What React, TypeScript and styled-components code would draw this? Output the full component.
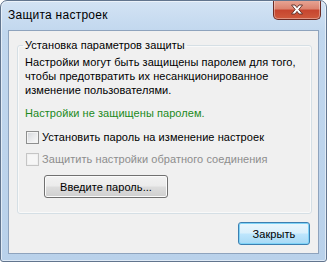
import styled, { createGlobalStyle, css } from "styled-components";

const Global = createGlobalStyle`
  html, body {
    margin: 0;
    padding: 0;
    background: #fff;
  }
  * {
    box-sizing: border-box;
  }
`;

const Window = styled.div`
  width: 327px;
  height: 262px;
  display: flex;
  flex-direction: column;
  border: 1px solid #62758e;
  border-radius: 7px 7px 3px 3px;
  background: linear-gradient(180deg, #d3e3f4 0%, #c1d7ee 12%, #b9d1ea 100%);
  box-shadow: inset 0 0 0 1px rgba(255, 255, 255, 0.55);
  overflow: hidden;
`;

const TitleBar = styled.div`
  height: 29px;
  display: flex;
  align-items: flex-start;
  justify-content: space-between;
  padding-left: 7px;
  padding-right: 5px;
`;

const Title = styled.span`
  padding-top: 6px;
  font-family: "Liberation Sans", Arial, sans-serif;
  font-size: 12px;
  line-height: 16px;
  letter-spacing: 0.25px;
  color: #000;
`;

const CloseX = styled.div`
  width: 48px;
  height: 20px;
  margin-top: -1px;
  display: flex;
  align-items: center;
  justify-content: center;
  border: 1px solid #6d2b24;
  border-top: none;
  border-radius: 0 0 5px 5px;
  background: linear-gradient(180deg, #e8a797 0%, #dc8470 45%, #c7462f 55%, #cf5a3d 100%);
  box-shadow: inset 0 0 0 1px rgba(255, 255, 255, 0.35);
`;

const Frame = styled.div`
  flex: 1;
  padding: 0 7px 7px;
  display: flex;
`;

const Client = styled.div`
  flex: 1;
  display: flex;
  flex-direction: column;
  border: 1px solid #8ea3bd;
  background: #f0f0f0;
  padding: 7px 6px 8px 8px;
  font-family: "Liberation Sans", Arial, sans-serif;
  font-size: 11px;
  line-height: 14px;
  letter-spacing: 0.06px;
  color: #000;
`;

const Group = styled.fieldset`
  margin: 0;
  height: 176px;
  padding: 3px 7px 0 7px;
  border: 1px solid #d5dfe5;
  border-radius: 3px;
  box-shadow: inset 0 0 0 1px rgba(255, 255, 255, 0.6);
`;

const Legend = styled.legend`
  padding: 0 2px;
  margin-left: -2px;
`;

const Text = styled.p<{ $green?: boolean }>`
  margin: 0;
  white-space: nowrap;
  ${(p) =>
    p.$green &&
    css`
      margin-top: 9px;
      color: #1c8a1c;
    `}
`;

const CheckRow = styled.label<{ $disabled?: boolean; $gap: number }>`
  display: flex;
  align-items: center;
  gap: 3px;
  height: 14px;
  margin-top: ${(p) => p.$gap}px;
  padding-left: 1px;
  color: ${(p) => (p.$disabled ? "#8d8d8d" : "#000")};
`;

const Box = styled.span<{ $disabled?: boolean }>`
  width: 13px;
  height: 13px;
  flex: none;
  border: 1px solid ${(p) => (p.$disabled ? "#c5c5c5" : "#8e8f8f")};
  background: ${(p) =>
    p.$disabled
      ? "#f6f6f6"
      : "linear-gradient(135deg, #d3d6da 0%, #e9eaec 50%, #fafafa 100%)"};
  box-shadow: inset 0 0 0 1px ${(p) => (p.$disabled ? "#f0f0f0" : "#f4f4f4")};
`;

const Button = styled.div<{ $primary?: boolean; $width: number }>`
  width: ${(p) => p.$width}px;
  height: 23px;
  display: flex;
  align-items: center;
  justify-content: center;
  border: 1px solid #707070;
  border-radius: 3px;
  background: linear-gradient(180deg, #f2f2f2 0%, #ebebeb 48%, #dddddd 52%, #cfcfcf 100%);
  box-shadow: inset 0 0 0 1px #fbfbfb;
  ${(p) =>
    p.$primary &&
    css`
      border-color: #3c7fb1;
      background: linear-gradient(180deg, #eaf6fd 0%, #d9f0fc 48%, #bee6fd 52%, #a7d9f5 100%);
      box-shadow: inset 0 0 0 1px #7fd3f7;
    `}
`;

const PasswordButton = styled(Button)`
  margin-top: 9px;
  margin-left: 19px;
`;

const Footer = styled.div`
  display: flex;
  justify-content: flex-end;
  margin-top: 8px;
  padding-right: 2px;
`;

export default function App() {
  return (
    <>
      <Global />
      <Window>
        <TitleBar>
          <Title>Защита настроек</Title>
          <CloseX>
            <svg width="14" height="11" viewBox="0 0 14 11">
              <path
                d="M1.5 1 H5 L7 3.6 L9 1 H12.5 L8.8 5.5 L12.5 10 H9 L7 7.4 L5 10 H1.5 L5.2 5.5 Z"
                fill="#fff"
                stroke="#5a2a24"
                strokeWidth="0.9"
                strokeLinejoin="round"
              />
            </svg>
          </CloseX>
        </TitleBar>
        <Frame>
          <Client>
            <Group>
              <Legend>Установка параметров защиты</Legend>
              <Text>Настройки могут быть защищены паролем для того,</Text>
              <Text>чтобы предотвратить их несанкционированное</Text>
              <Text>изменение пользователями.</Text>
              <Text $green>Настройки не защищены паролем.</Text>
              <CheckRow $gap={10}>
                <Box />
                Установить пароль на изменение настроек
              </CheckRow>
              <CheckRow $gap={8} $disabled>
                <Box $disabled />
                Защитить настройки обратного соединения
              </CheckRow>
              <PasswordButton $width={124}>Введите пароль...</PasswordButton>
            </Group>
            <Footer>
              <Button $primary $width={72}>
                Закрыть
              </Button>
            </Footer>
          </Client>
        </Frame>
      </Window>
    </>
  );
}
